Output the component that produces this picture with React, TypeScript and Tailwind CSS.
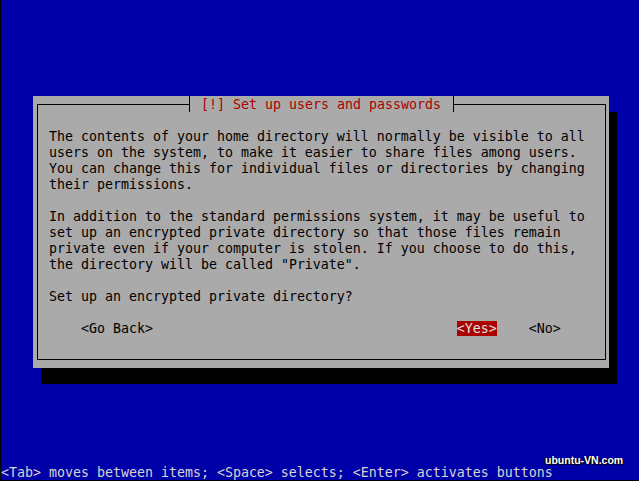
const paragraphs = [
  "The contents of your home directory will normally be visible to all",
  "users on the system, to make it easier to share files among users.",
  "You can change this for individual files or directories by changing",
  "their permissions.",
  "",
  "In addition to the standard permissions system, it may be useful to",
  "set up an encrypted private directory so that those files remain",
  "private even if your computer is stolen. If you choose to do this,",
  'the directory will be called "Private".',
  "",
  "Set up an encrypted private directory?",
  "",
];

const mono = "font-['DejaVu_Sans_Mono','Liberation_Mono',monospace] text-[13.29px] leading-[16px]";

export default function App() {
  return (
    <div className="w-[639px] h-[481px] bg-black">
      <div className="relative ml-[1px] w-[638px] h-[480px] bg-[#0000a8] flex flex-col">
        <div className="pt-[96px] pl-[32px]">
          <div className="w-[576px] h-[272px] bg-[#aaaaaa] shadow-[8px_16px_0_0_#000] pt-2 pb-2 pl-1 pr-[3px] flex">
            <div className={`relative flex-1 border border-black pl-[11px] pt-[24px] text-black ${mono}`}>
              <div className="absolute left-[151px] top-[-9px] w-[265px] h-4 bg-[#aaaaaa] border-x border-black pl-[11px] pt-[1px] text-[#aa0000] whitespace-pre">
                [!] Set up users and passwords
              </div>
              {paragraphs.map((line, i) => (
                <div key={i} className="h-4 whitespace-pre">
                  {line}
                </div>
              ))}
              <div className="h-4 whitespace-pre">
                {"    "}
                <span>&lt;Go Back&gt;</span>
                {" ".repeat(38)}
                <span className="bg-[#aa0000] text-[#e0e0e0]">&lt;Yes&gt;</span>
                {"    "}
                <span>&lt;No&gt;</span>
              </div>
            </div>
          </div>
        </div>
        <div className="flex-1" />
        <div className={`h-4 pt-[1px] whitespace-pre text-[#d4d4d4] ${mono}`}>
          &lt;Tab&gt; moves between items; &lt;Space&gt; selects; &lt;Enter&gt; activates buttons
        </div>
        <div className="absolute left-[544px] top-[454px] font-['Liberation_Sans',Arial,sans-serif] text-[10.5px] font-bold leading-[12px] text-white [text-shadow:1px_1px_0_#000,-1px_0_0_#000]">
          ubuntu-VN.com
        </div>
      </div>
    </div>
  );
}
